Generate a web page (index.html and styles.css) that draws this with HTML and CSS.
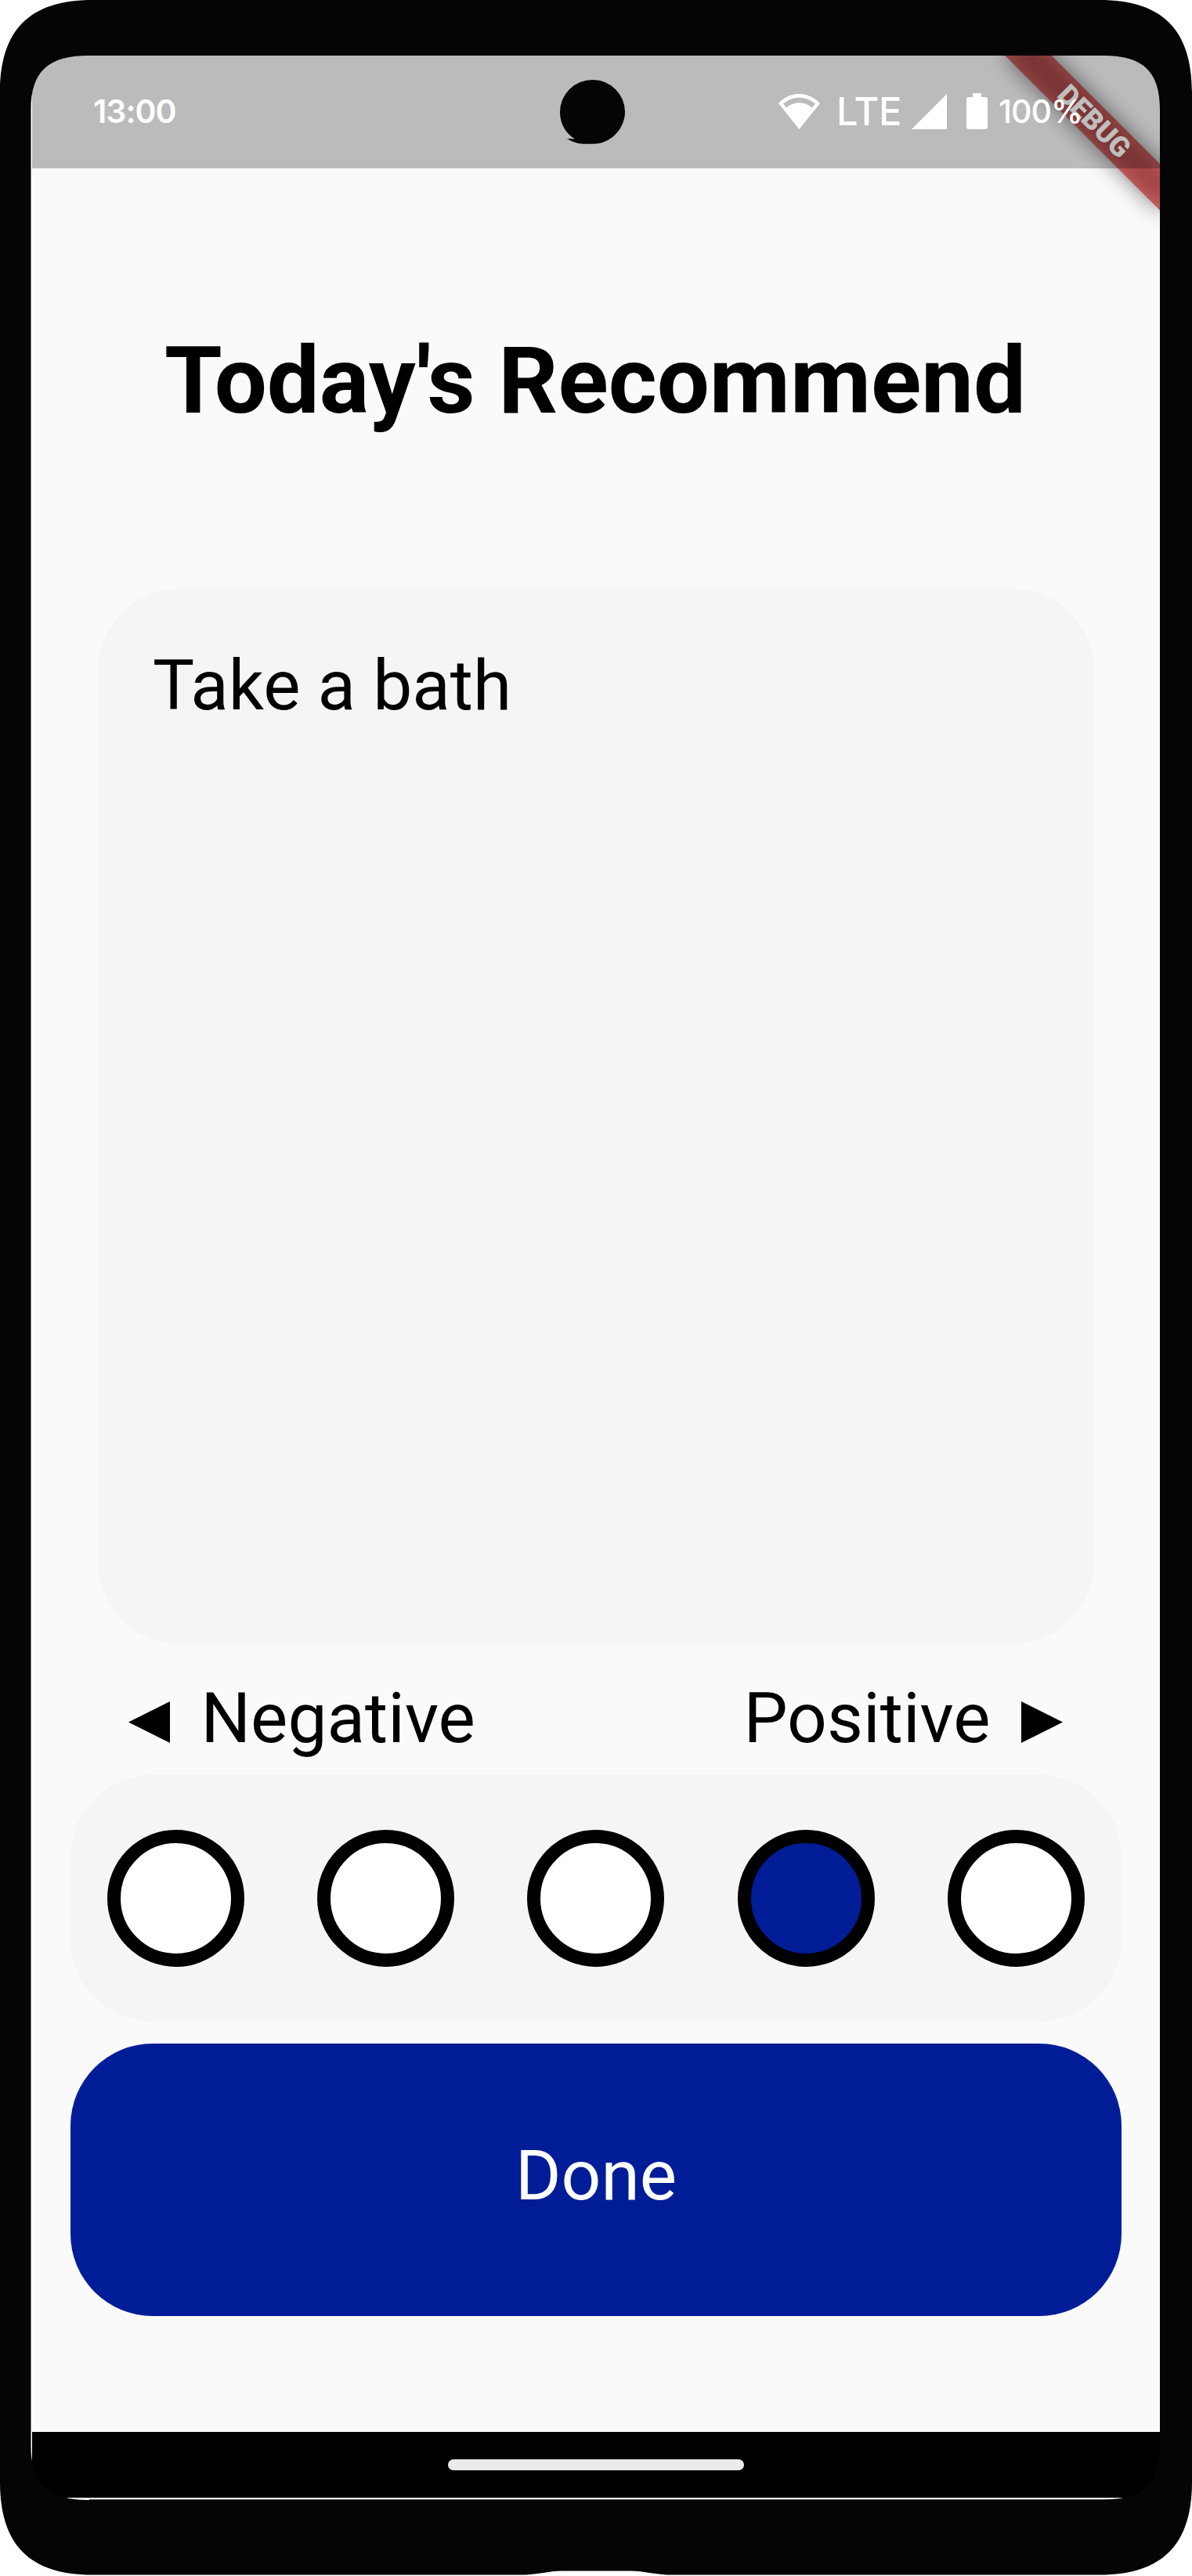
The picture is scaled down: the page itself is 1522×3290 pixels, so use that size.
FILE: index.html
```html
<!DOCTYPE html>
<html lang="en">
<head>
<meta charset="utf-8">
<title>Today's Recommend</title>
<link rel="stylesheet" href="styles.css">
</head>
<body>
<div class="device">
  <div class="screen">
    <header class="status">
      <span class="clock">13:00</span>
      <div class="indicators">
        <svg class="wifi" viewBox="0 0 53 45"><path fill="#fff" fill-rule="evenodd" d="M0 12C15 -4 38 -4 53 12L26.500 45ZM6 12.500L10 17.500C20 9 33 9 43 17.500L47 12.500C35 2 18 2 6 12.500Z"/></svg>
        <span class="network">LTE</span>
        <svg class="signal" viewBox="0 0 45 45"><path fill="#fff" d="M45 0V45H0Z"/></svg>
        <svg class="battery" viewBox="0 0 27 46"><path fill="#fff" d="M8 0H19V5H24Q27 5 27 8V43Q27 46 24 46H3Q0 46 0 43V8Q0 5 3 5H8Z"/></svg>
        <span class="percent">100%</span>
      </div>
    </header>
    <main class="app">
      <h1 class="title">Today's Recommend</h1>
      <section class="card">Take a bath</section>
      <div class="labels">
        <span class="label"><svg class="arrow" viewBox="0 0 53 53"><path d="M0 26.500L53 0V53Z"/></svg>Negative</span>
        <span class="label">Positive<svg class="arrow" viewBox="0 0 53 53"><path d="M53 26.500L0 0V53Z"/></svg></span>
      </div>
      <div class="rating">
        <button class="dot"></button>
        <button class="dot"></button>
        <button class="dot"></button>
        <button class="dot selected"></button>
        <button class="dot"></button>
      </div>
      <button class="done">Done</button>
    </main>
    <nav class="gesture"><span class="handle"></span></nav>
    <div class="ribbon"><span class="ribbon-text">DEBUG</span></div>
  </div>
  <svg class="frame" viewBox="0 0 1522 3290">
    <path fill="#050505" fill-rule="evenodd" d="M0 118C0 38 38 0 118 0H1404C1484 0 1522 38 1522 118V3170C1522 3250 1484 3288.500 1404 3288.500H851C830 3287 820 3283.500 806 3283.500H717C703 3283.500 693 3287 672 3288.500H118C38 3288.500 0 3250 0 3170ZM39.500 140C39.500 92 61 71 113 71H1409C1460 71 1481 92 1481 140V3124C1481 3171 1460 3192.300 1409 3192.300H114V3193C61 3193 39.500 3171 39.500 3124Z"/>
    <path fill="#050505" d="M756.500 102A41.500 41 0 0 1 798 143C798 164 780 183.700 758 183.700H745C737 183.500 730 181 724 177L734 177.500C722 170 715 158 715 143A41.500 41 0 0 1 756.500 102Z"/>
  </svg>
</div>
</body>
</html>
```
FILE: styles.css
```css
* { box-sizing: border-box; }
body { margin: 0; background: #fff; font-family: Roboto, sans-serif; color: #000; }
button { margin: 0; padding: 0; font: inherit; }
svg { display: block; flex: none; }

.device { position: relative; width: 1522px; height: 3290px; padding: 71px 41px 100px; overflow: hidden; }
.frame { position: absolute; inset: 0; width: 1522px; height: 3290px; z-index: 4; pointer-events: none; }
.screen { position: relative; display: flex; flex-direction: column; height: 3119px; background: #fafafa; overflow: hidden; }

.status {
  position: relative; z-index: 2; height: 144px; flex: none;
  display: flex; justify-content: space-between; align-items: center;
  padding: 0 99px 2px 78px; background: rgba(0, 0, 0, 0.25);
  font-family: Inter, sans-serif; font-weight: 600; color: #fff;
}
.clock { font-size: 41px; letter-spacing: -1px; }
.indicators { display: flex; align-items: center; }
.wifi { width: 53px; height: 45px; }
.network { width: 80px; font-size: 49px; font-weight: 500; margin-left: 21px; letter-spacing: -0.5px; white-space: nowrap; }
.signal { width: 45px; height: 45px; margin-left: 16px; }
.battery { width: 27px; height: 46px; margin-left: 25px; }
.percent { width: 107px; font-size: 41px; font-weight: 500; margin-left: 14px; letter-spacing: -1px; white-space: nowrap; }

.app { flex: 1; display: flex; flex-direction: column; padding: 0 49px; }
.title { height: 537px; margin: 0; padding-right: 2px; line-height: 543px; font-size: 119px; font-weight: 700; text-align: center; white-space: nowrap; }
.card { height: 1347px; margin: 0 35px; padding: 70px; border-radius: 105px; background: #f5f5f5; font-size: 89.2px; line-height: 107px; }
.labels { height: 168px; display: flex; justify-content: space-between; align-items: flex-start; padding: 43px 75px 0 74px; }
.label { display: flex; gap: 39.5px; font-size: 89.2px; line-height: 105px; }
.arrow { width: 53px; height: 53px; margin-top: 31px; }
.rating { height: 315px; display: flex; justify-content: space-around; align-items: center; border-radius: 105px; background: #f5f5f5; }
.dot { width: 175px; height: 175px; border: 17.5px solid #000; border-radius: 50%; background: #fff; }
.dot.selected { background: #001d97; }
.done { height: 348px; margin-top: 28px; padding-bottom: 10px; border: 0; border-radius: 105px; background: #001d97; color: #fff; font-size: 89.2px; line-height: 106px; }

.gesture { height: 84px; flex: none; display: flex; align-items: center; justify-content: center; background: #000; }
.handle { width: 378px; height: 14px; border-radius: 7px; background: #ebebeb; }

.ribbon { position: absolute; z-index: 1; left: 1215.9px; top: 63.1px; width: 280px; height: 42px; transform: rotate(45deg); text-align: center; }
.ribbon::before, .ribbon::after { content: ""; position: absolute; inset: 0; }
.ribbon::before { background: rgba(0, 0, 0, 0.5); filter: blur(14px); }
.ribbon::after { background: rgba(183, 28, 28, 0.627); }
.ribbon-text { position: relative; z-index: 1; display: block; color: #fff; font-size: 35.7px; font-weight: 900; line-height: 42px; }
```
